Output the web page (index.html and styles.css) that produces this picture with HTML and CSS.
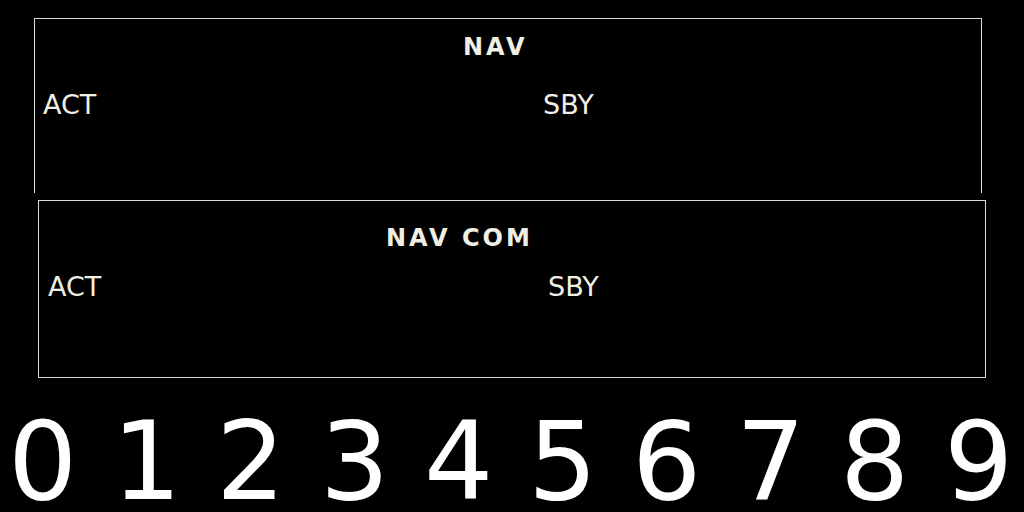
FILE: index.html
```html
<!DOCTYPE html>
<html>
<head>
<meta charset="utf-8">
<link rel="stylesheet" href="styles.css">
</head>
<body>
  <section class="panel panel-nav">
    <div class="title">NAV</div>
    <div class="row">
      <span class="label">ACT</span>
      <span class="label">SBY</span>
    </div>
  </section>
  <section class="panel panel-navcom">
    <div class="title">NAV COM</div>
    <div class="row">
      <span class="label">ACT</span>
      <span class="label">SBY</span>
    </div>
  </section>
  <div class="digits">0 1 2 3 4 5 6 7 8 9</div>
</body>
</html>
```
FILE: styles.css
```css
html, body {
  margin: 0;
  padding: 0;
  background: #000;
  overflow: hidden;
}
body {
  width: 1024px;
  height: 512px;
  font-family: "DejaVu Sans", sans-serif;
  color: #efefe3;
}
.panel {
  box-sizing: border-box;
  width: 948px;
  border: 1px solid #dcdcd6;
}
.panel-nav {
  margin: 18px 0 0 34px;
  height: 175px;
  border-bottom: none;
  padding-top: 14px;
}
.panel-navcom {
  margin: 7px 0 0 38px;
  height: 178px;
  padding-top: 23px;
}
.title {
  font-size: 24px;
  line-height: 28px;
  font-weight: bold;
  letter-spacing: 3px;
  white-space: pre;
}
.panel-nav .title { padding-left: 428px; }
.panel-navcom .title { padding-left: 347px; }
.row {
  display: grid;
  grid-template-columns: 500px 1fr;
  font-size: 27px;
  line-height: 31px;
}
.panel-nav .row { margin-top: 28px; padding-left: 8px; }
.panel-navcom .row { margin-top: 19px; padding-left: 9px; }
.digits {
  margin-top: 35px;
  padding-left: 8px;
  font-size: 109px;
  line-height: 98px;
  color: #fff;
  white-space: pre;
}
```
